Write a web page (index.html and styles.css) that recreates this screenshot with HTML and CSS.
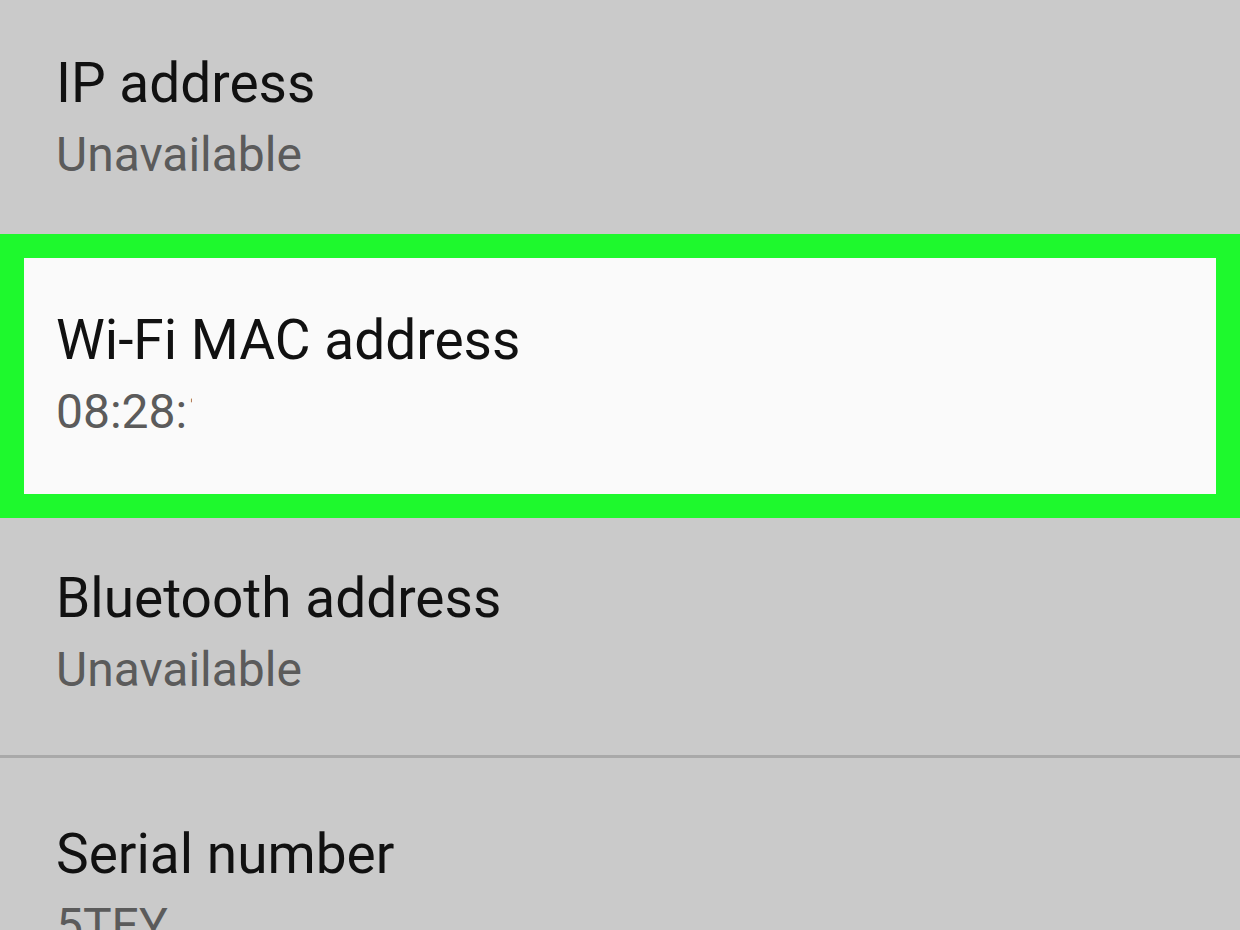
FILE: index.html
```html
<!DOCTYPE html>
<html lang="en">
<head>
<meta charset="utf-8">
<title>Status</title>
<link rel="stylesheet" href="styles.css">
</head>
<body>
<div class="list">
  <div class="row row-first">
    <div class="title">IP address</div>
    <div class="sub">Unavailable</div>
  </div>
  <div class="highlight">
    <div class="row row-hl">
      <div class="title">Wi-Fi MAC address</div>
      <div class="sub">08:28:<span class="cut">1</span></div>
    </div>
  </div>
  <div class="row row-third">
    <div class="title">Bluetooth address</div>
    <div class="sub">Unavailable</div>
  </div>
  <div class="divider"></div>
  <div class="row row-last">
    <div class="title">Serial number</div>
    <div class="sub">5TEY</div>
  </div>
</div>
</body>
</html>
```

FILE: styles.css
```css
html, body {
  margin: 0;
  padding: 0;
  height: 100%;
  overflow: hidden;
}
body {
  background: #cacaca;
  font-family: Roboto, "Liberation Sans", sans-serif;
}
.list {
  display: flex;
  flex-direction: column;
}
.row {
  padding: 48px 57px 45px;
}
.title {
  font-size: 55px;
  line-height: 70px;
  color: #111111;
  white-space: nowrap;
}
.sub {
  font-size: 48px;
  line-height: 74px;
  color: #5b5b5b;
  white-space: nowrap;
}
.row-first {
  padding-top: 48px;
  padding-bottom: 45px;
  padding-left: 56px;
}
.highlight {
  margin: -3px 0 -3px;
  border: 24px solid #1ef92d;
  background: #fafafa;
}
.row-hl {
  padding: 47px 33px 45px 32px;
}
.row-third {
  padding-top: 48px;
  padding-bottom: 45px;
  padding-left: 56px;
}
.divider {
  height: 3px;
  margin-top: 3px;
  background: #a9a9a9;
}
.row-last {
  padding-top: 61px;
  padding-left: 56px;
}
.cut {
  display: inline-block;
  width: 5px;
  overflow: hidden;
  vertical-align: top;
  height: 74px;
}
```
